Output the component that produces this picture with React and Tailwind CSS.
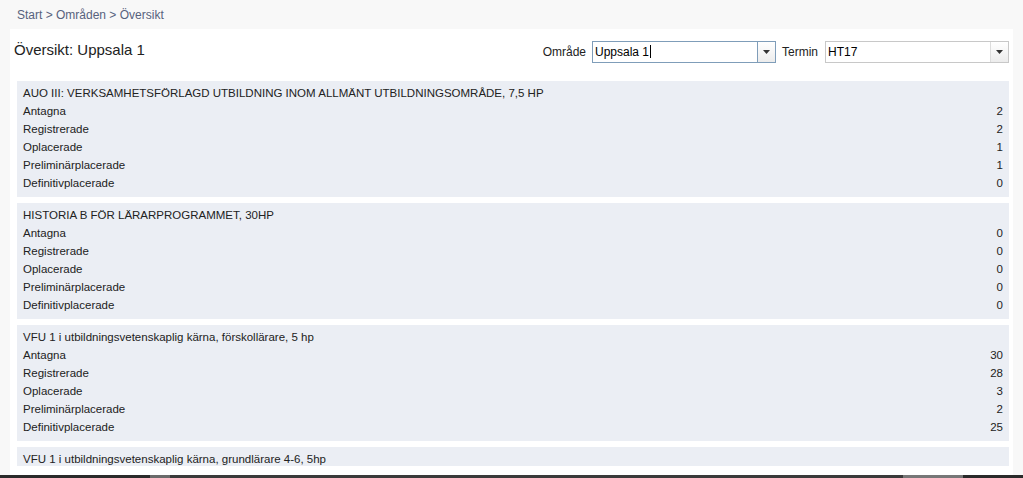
import React from "react";

const courses = [
  {
    title: "AUO III: VERKSAMHETSFÖRLAGD UTBILDNING INOM ALLMÄNT UTBILDNINGSOMRÅDE, 7,5 HP",
    values: [2, 2, 1, 1, 0],
  },
  {
    title: "HISTORIA B FÖR LÄRARPROGRAMMET, 30HP",
    values: [0, 0, 0, 0, 0],
  },
  {
    title: "VFU 1 i utbildningsvetenskaplig kärna, förskollärare, 5 hp",
    values: [30, 28, 3, 2, 25],
  },
  {
    // only the heading of this one is inside the viewport
    title: "VFU 1 i utbildningsvetenskaplig kärna, grundlärare 4-6, 5hp",
    values: [],
  },
];

const labels = ["Antagna", "Registrerade", "Oplacerade", "Preliminärplacerade", "Definitivplacerade"];

const SelectBox = ({ value, focused, width }) => (
  <div
    className={`flex h-[22px] ${width} bg-white border ${
      focused ? "border-[#7f9db9]" : "border-[#c8c8c8]"
    }`}
  >
    <div className="flex-1 flex items-center pl-[2px] text-[12px] text-black">
      {value}
      {focused && <span className="ml-[1px] inline-block w-px h-[13px] bg-black" />}
    </div>
    <div
      className={`w-[18px] flex items-center justify-center border-l ${
        focused ? "border-[#7f9db9]" : "border-[#dcdcdc]"
      } bg-gradient-to-b from-white to-[#ececec]`}
    >
      <svg width="7" height="4" viewBox="0 0 7 4">
        <path d="M0 0h7L3.5 4z" fill="#333" />
      </svg>
    </div>
  </div>
);

const CourseCard = ({ course }) => (
  <div className="bg-[#ebeef4] px-[6px] pt-[3px] pb-[5px] mb-[6px]">
    <div className="h-[18px] leading-[18px]">{course.title}</div>
    {course.values.map((v, i) => (
      <div key={labels[i]} className="flex justify-between h-[18px] leading-[18px]">
        <span>{labels[i]}</span>
        <span>{v}</span>
      </div>
    ))}
  </div>
);

export default function App() {
  return (
    <div
      className="h-[478px] w-[1023px] overflow-hidden flex flex-col bg-[#f8f8f8] text-[11.5px] text-[#222]"
      style={{ fontFamily: '"Liberation Sans", Arial, sans-serif' }}
    >
      {/* Breadcrumb */}
      <div className="h-[29px] shrink-0 flex items-center px-[17px] text-[12px] text-[#57627d]">
        Start &gt; Områden &gt; Översikt
      </div>

      {/* Main panel */}
      <div className="flex-1 min-h-0 flex flex-col mx-[10px] bg-white pl-[7px] pr-[4px] pb-[9px]">
        <div className="flex items-center justify-between h-[42px] pt-[1px] shrink-0">
          <h1 className="text-[15px] text-[#222] -ml-[3px]">Översikt: Uppsala 1</h1>
          <div className="flex items-center mt-[2px]">
            <span className="mr-[6px] text-[12px] text-[#222]">Område</span>
            <SelectBox value="Uppsala 1" focused width="w-[184px]" />
            <span className="ml-[6px] mr-[7px] text-[12px] text-[#222]">Termin</span>
            <SelectBox value="HT17" width="w-[184px]" />
          </div>
        </div>
        <div className="flex-1 min-h-0 overflow-hidden mt-[10px]">
          {courses.map((c) => (
            <CourseCard key={c.title} course={c} />
          ))}
        </div>
      </div>

      {/* Bottom window edge */}
      <div className="h-[3px] shrink-0 flex">
        <div className="w-[150px] bg-[#2a2a2a]" />
        <div className="w-[20px] bg-[#6a6a6a]" />
        <div className="flex-1 bg-[#3a3a3a]" />
        <div className="w-[60px] bg-[#777]" />
        <div className="w-[60px] bg-[#2a2a2a]" />
      </div>
    </div>
  );
}
